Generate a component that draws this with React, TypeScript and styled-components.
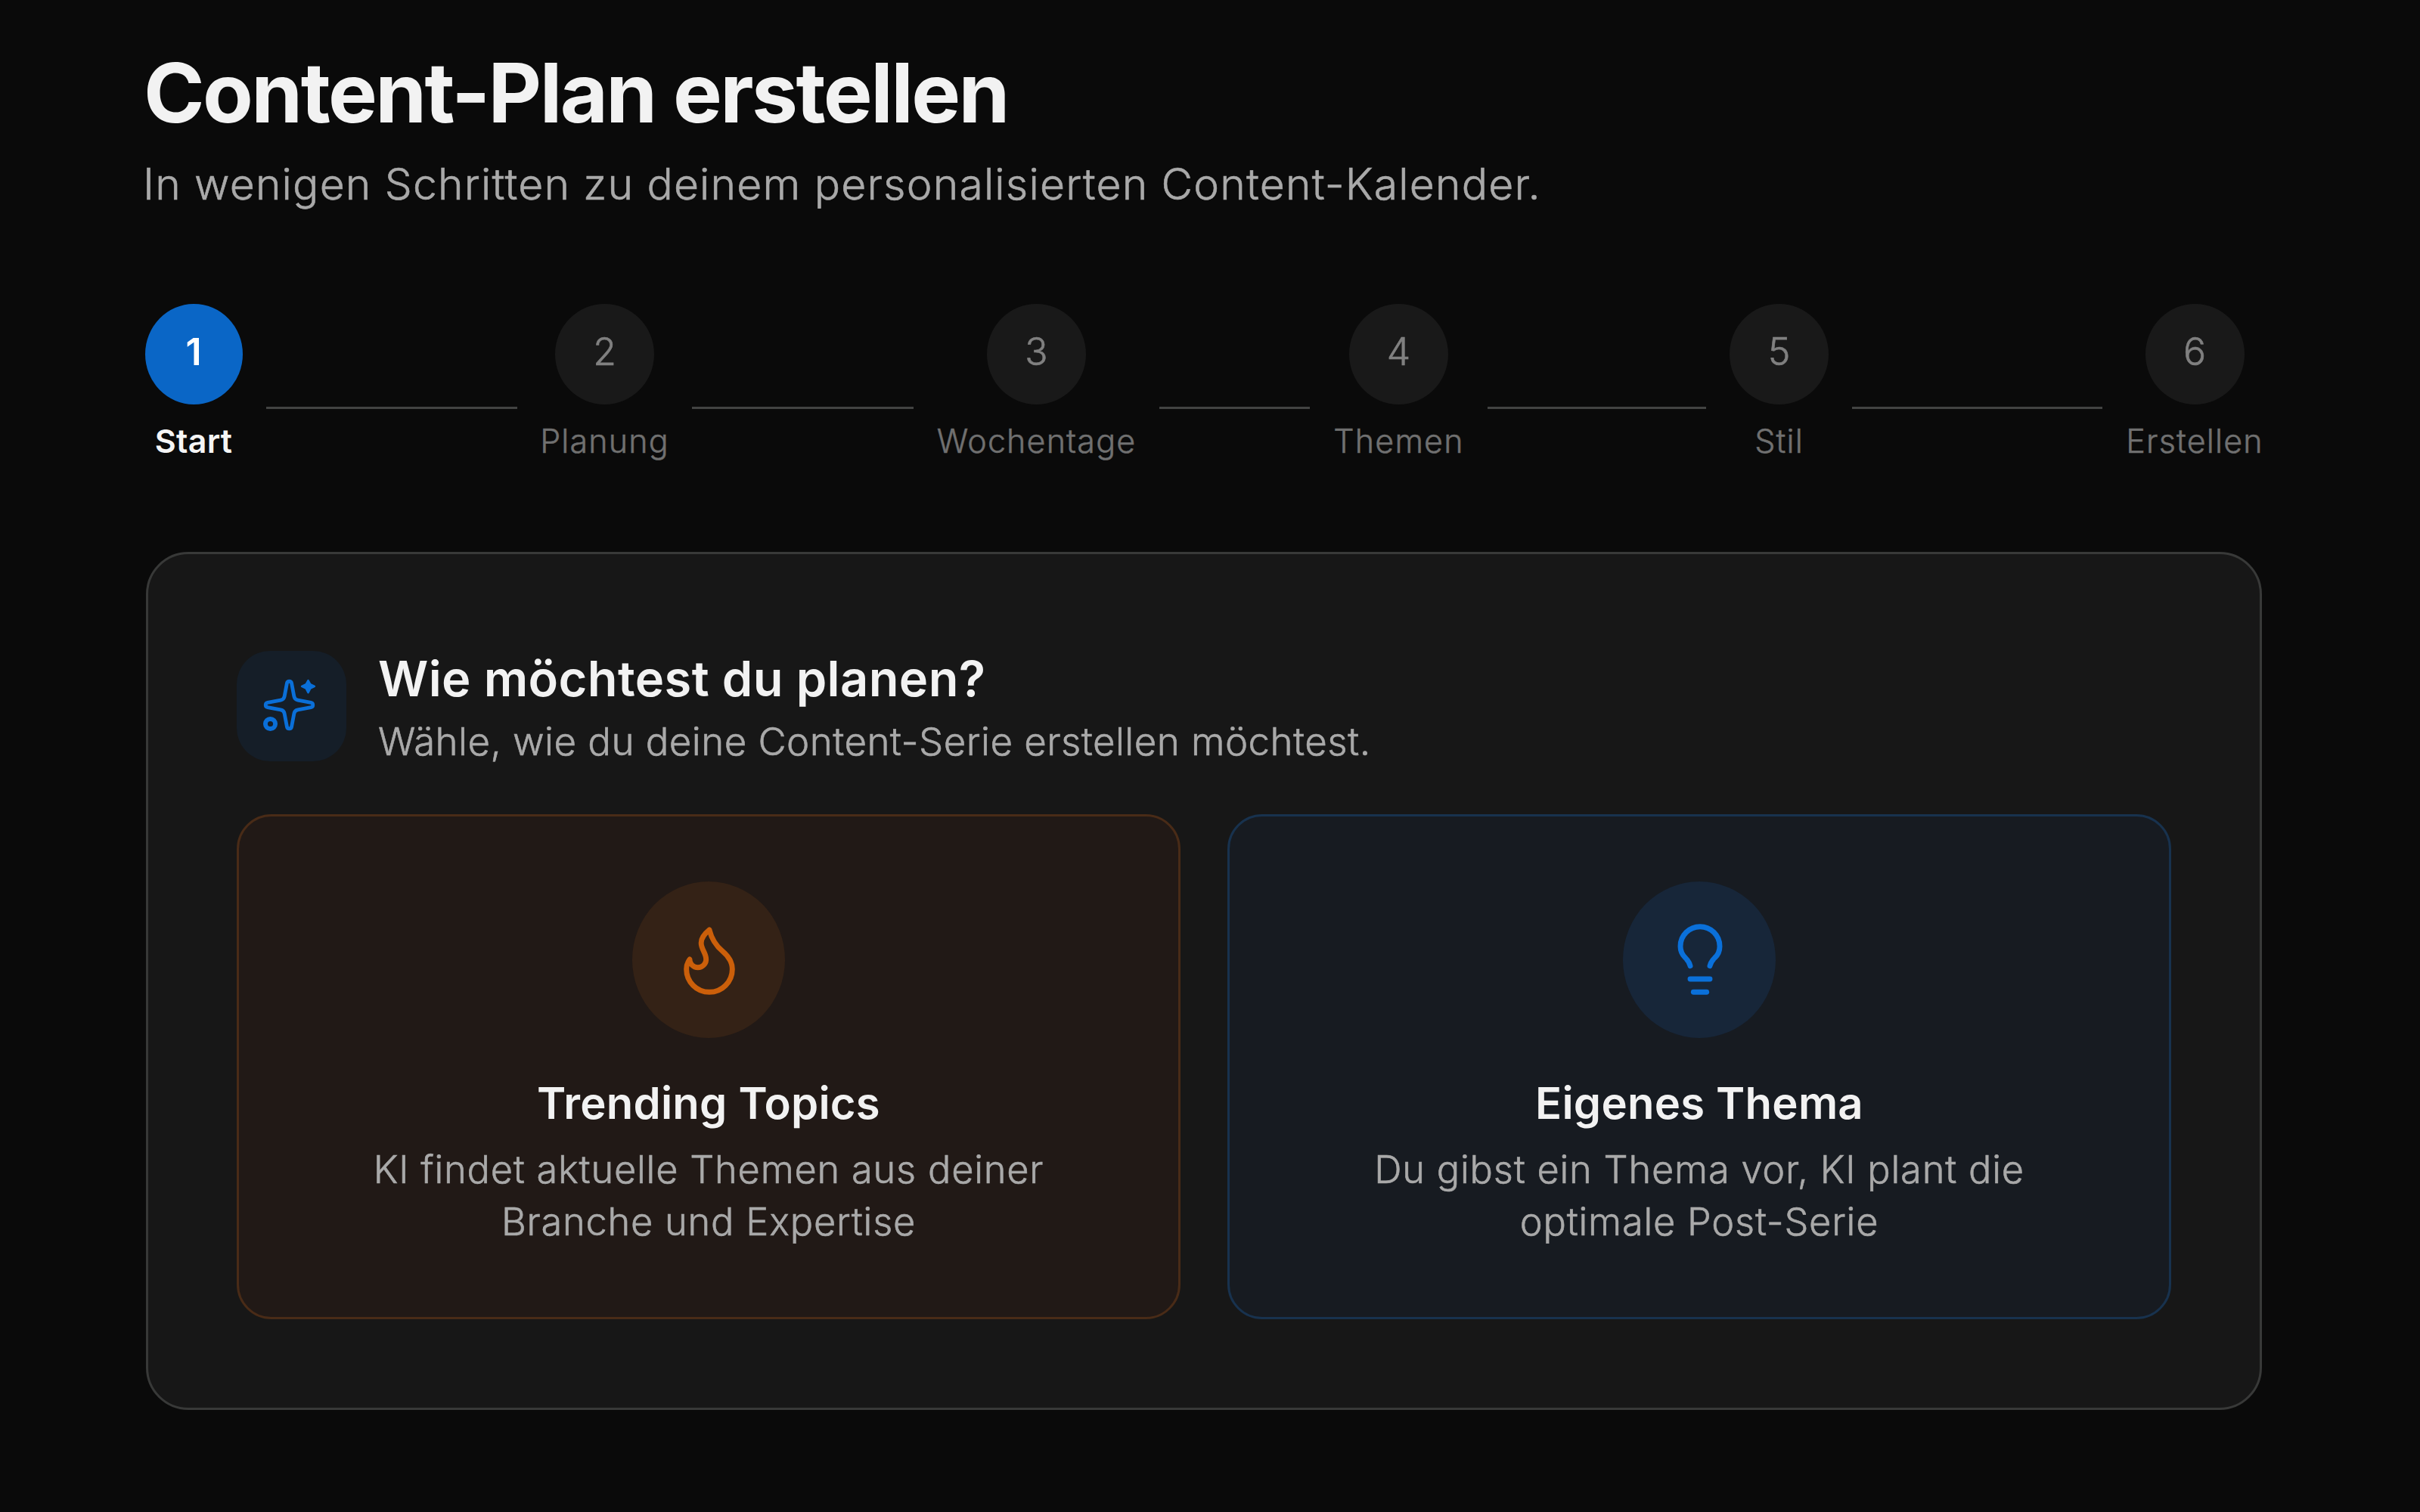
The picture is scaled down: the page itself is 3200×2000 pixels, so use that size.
import { Flame, Lightbulb } from "lucide-react";
import { Fragment } from "react";
import styled, { createGlobalStyle } from "styled-components";

const GlobalStyle = createGlobalStyle`
  * {
    box-sizing: border-box;
    margin: 0;
    padding: 0;
  }
  body {
    background-color: #0a0a0a;
    color: #f2f2f2;
    font-family: Inter, "Liberation Sans", sans-serif;
    overflow: hidden;
  }
`;

const Container = styled.div`
  width: 3200px;
  height: 2000px;
  padding: 62px 208px 0 191px;
  white-space: nowrap;
`;

const Title = styled.h1`
  margin-left: -1px;
  font-size: 109px;
  line-height: 120px;
  font-weight: 700;
  letter-spacing: -0.0235em;
`;

const Subtitle = styled.p`
  margin-top: 20px;
  margin-left: -2px;
  font-size: 57px;
  line-height: 84px;
  font-weight: 300;
  letter-spacing: 0.0208em;
  color: #a9a9a9;
  -webkit-text-stroke: 0.6px #a9a9a9;
`;

const Steps = styled.ol`
  display: grid;
  grid-template-columns: 130px 332px 169px 293px 263px 199px 173px 289px 131px 331px 182px;
  column-gap: 31px;
  margin-top: 116px;
  height: 210px;
  list-style: none;
`;

const Step = styled.li`
  display: flex;
  flex-direction: column;
  align-items: center;
`;

interface ActiveProps {
  $active: boolean;
}

const StepNumber = styled.span<ActiveProps>`
  display: flex;
  justify-content: center;
  align-items: center;
  width: ${(props) => (props.$active ? "129px" : "131px")};
  height: 133px;
  padding-bottom: 8px;
  border-radius: 50%;
  font-size: 50px;
  font-weight: ${(props) => (props.$active ? 600 : 300)};
  background-color: ${(props) => (props.$active ? "#0a66c6" : "#191919")};
  color: ${(props) => (props.$active ? "white" : "#808080")};
  -webkit-text-stroke: ${(props) => (props.$active ? "0" : "0.6px #808080")};
`;

const StepLabel = styled.span<ActiveProps>`
  margin-top: 19px;
  font-size: 43px;
  line-height: 58px;
  letter-spacing: ${(props) => (props.$active ? "0.006em" : "0.027em")};
  font-weight: ${(props) => (props.$active ? 600 : 300)};
  color: ${(props) => (props.$active ? "#f5f5f5" : "#707070")};
  -webkit-text-stroke: ${(props) => (props.$active ? "0" : "0.5px #707070")};
`;

const Connector = styled.li`
  height: 3px;
  margin-top: 136px;
  background-color: #424342;
`;

const Card = styled.section`
  width: 2798px;
  height: 1135px;
  margin-top: 118px;
  margin-left: 2px;
  padding: 128px 115px 0 117px;
  border: 3px solid #383938;
  border-radius: 56px;
  background-color: #171717;
`;

const CardHeader = styled.header`
  display: flex;
  gap: 42px;
`;

const IconBox = styled.div`
  display: flex;
  justify-content: center;
  align-items: center;
  width: 145px;
  height: 146px;
  padding: 0 6px 3px 0;
  border-radius: 44px;
  background-color: #151e28;
  color: #0a6fd8;
`;

const CardTitle = styled.h2`
  margin-top: -3px;
  font-size: 65px;
  line-height: 80px;
  font-weight: 600;
  letter-spacing: 0.006em;
`;

const CardText = styled.p`
  margin-top: 5px;
  font-size: 51px;
  line-height: 76px;
  font-weight: 300;
  letter-spacing: 0.0088em;
  color: #a9a9a9;
  -webkit-text-stroke: 0.6px #a9a9a9;
`;

const Options = styled.div`
  display: grid;
  grid-template-columns: 1248px 1248px;
  gap: 62px;
  margin-top: 58px;
`;

interface OptionProps {
  $tone: "orange" | "blue";
}

const Option = styled.button<OptionProps>`
  display: flex;
  flex-direction: column;
  align-items: center;
  height: 668px;
  padding-top: 86px;
  border: 3px solid
    ${(props) => (props.$tone === "orange" ? "#492b17" : "#18324e")};
  border-radius: 46px;
  background-color: ${(props) =>
    props.$tone === "orange" ? "#211916" : "#171b21"};
  color: inherit;
  font-family: inherit;
`;

const OptionIcon = styled.span<OptionProps>`
  display: flex;
  justify-content: center;
  align-items: center;
  width: 202px;
  height: 207px;
  padding: 0 0 1px 2px;
  border-radius: 50%;
  background-color: ${(props) =>
    props.$tone === "orange" ? "#342216" : "#172639"};
  color: ${(props) => (props.$tone === "orange" ? "#cb5f0a" : "#0a70da")};
`;

const OptionTitle = styled.h3`
  margin-top: 50px;
  font-size: 58px;
  line-height: 72px;
  font-weight: 600;
  letter-spacing: 0.004em;
`;

const OptionText = styled.p`
  margin-top: 17px;
  font-size: 50.5px;
  line-height: 69px;
  font-weight: 300;
  letter-spacing: 0.0156em;
  color: #a9a9a9;
  -webkit-text-stroke: 0.6px #a9a9a9;
`;

const steps = ["Start", "Planung", "Wochentage", "Themen", "Stil", "Erstellen"];
const current = 0;

// big outlined star, small solid star top right, dot bottom left
function SparklesIcon() {
  return (
    <svg
      width="75"
      height="75"
      viewBox="0 0 24 24"
      fill="none"
      stroke="currentColor"
      strokeWidth="1.55"
      strokeLinecap="round"
      strokeLinejoin="round"
    >
      <path d="M11.017 2.814a1 1 0 0 1 1.966 0l1.051 5.558a2 2 0 0 0 1.594 1.594l5.558 1.051a1 1 0 0 1 0 1.966l-5.558 1.051a2 2 0 0 0-1.594 1.594l-1.051 5.558a1 1 0 0 1-1.966 0l-1.051-5.558a2 2 0 0 0-1.594-1.594l-5.558-1.051a1 1 0 0 1 0-1.966l5.558-1.051a2 2 0 0 0 1.594-1.594z" />
      <path
        d="M20 1.6 20.9 3.2 22.7 4.1 20.9 5 20 6.8 19.1 5 17.3 4.1 19.1 3.2Z"
        fill="currentColor"
        strokeWidth="0.8"
      />
      <circle cx="4" cy="20" r="2.1" strokeWidth="1.9" />
    </svg>
  );
}

function App() {
  return (
    <Container>
      <GlobalStyle />
      <Title>Content-Plan erstellen</Title>
      <Subtitle>
        In wenigen Schritten zu deinem personalisierten Content-Kalender.
      </Subtitle>
      <Steps>
        {steps.map((step, index) => (
          <Fragment key={step}>
            {index > 0 && <Connector aria-hidden />}
            <Step>
              <StepNumber $active={index === current}>{index + 1}</StepNumber>
              <StepLabel $active={index === current}>{step}</StepLabel>
            </Step>
          </Fragment>
        ))}
      </Steps>
      <Card>
        <CardHeader>
          <IconBox>
            <SparklesIcon />
          </IconBox>
          <div>
            <CardTitle>Wie möchtest du planen?</CardTitle>
            <CardText>
              Wähle, wie du deine Content-Serie erstellen möchtest.
            </CardText>
          </div>
        </CardHeader>
        <Options>
          <Option $tone="orange">
            <OptionIcon $tone="orange">
              <Flame size={104} strokeWidth={1.6} />
            </OptionIcon>
            <OptionTitle>Trending Topics</OptionTitle>
            <OptionText>
              KI findet aktuelle Themen aus deiner
              <br />
              Branche und Expertise
            </OptionText>
          </Option>
          <Option $tone="blue">
            <OptionIcon $tone="blue">
              <Lightbulb size={104} strokeWidth={1.6} />
            </OptionIcon>
            <OptionTitle>Eigenes Thema</OptionTitle>
            <OptionText>
              Du gibst ein Thema vor, KI plant die
              <br />
              optimale Post-Serie
            </OptionText>
          </Option>
        </Options>
      </Card>
    </Container>
  );
}

export default App;
